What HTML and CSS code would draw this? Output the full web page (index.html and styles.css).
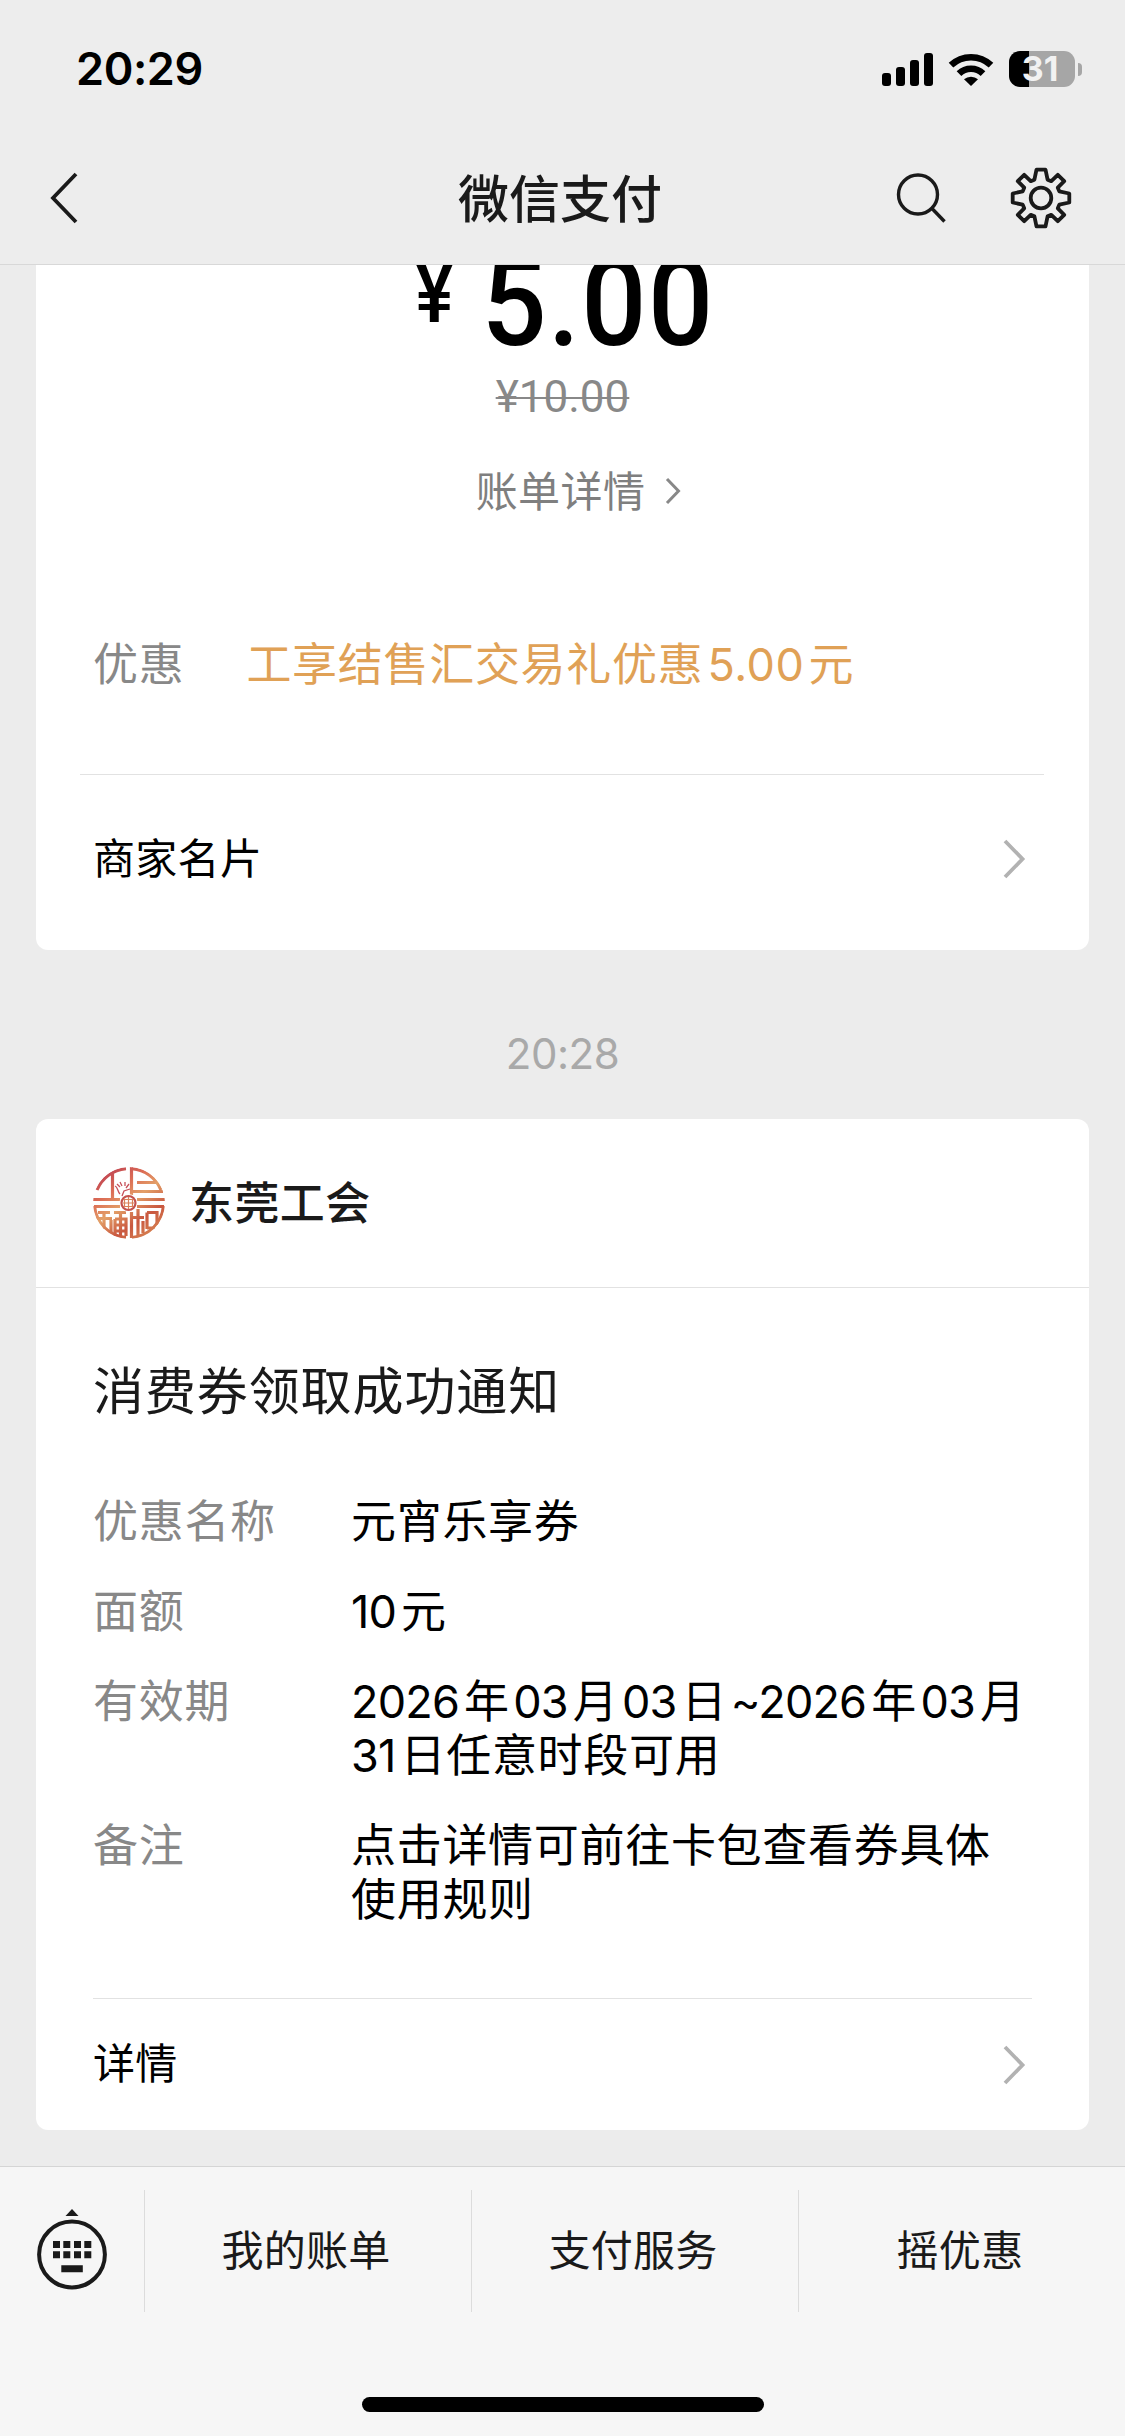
FILE: index.html
```html
<!DOCTYPE html>
<html lang="zh-CN">
<head>
<meta charset="utf-8">
<title>微信支付</title>
<link rel="stylesheet" href="styles.css">
</head>
<body>
<div class="screen">
  <header class="header">
    <div class="status">
      <span class="clock">20:29</span>
      <div class="status-icons">
        <svg class="signal" width="52" height="33" viewBox="0 0 52 33"><rect x="0" y="20" width="9" height="13" rx="3"/><rect x="14" y="14" width="9" height="19" rx="3"/><rect x="28" y="7" width="9" height="26" rx="3"/><rect x="42" y="0" width="9" height="33" rx="3"/></svg>
        <svg class="wifi" width="46" height="33" viewBox="0 0 46 33"><path d="M3 12.200a29 29 0 0 1 40 0M11 20.700a17 17 0 0 1 24 0" fill="none" stroke="#000" stroke-width="6.600"/><path d="M16 26.200a11 11 0 0 1 14 0L23 33z"/></svg>
        <div class="battery"><span class="battery-level">31</span><i class="battery-cap"></i></div>
      </div>
    </div>
    <nav class="nav">
      <svg class="back" width="30" height="54" viewBox="0 0 30 54"><path d="M27 3 4 27l23 24" fill="none" stroke="#1a1a1a" stroke-width="3.800"/></svg>
      <h1 class="nav-title">微信支付</h1>
      <div class="nav-actions">
        <svg width="52" height="52" viewBox="0 0 52 52" fill="none" stroke="#1a1a1a" stroke-width="3.400"><circle cx="23" cy="22.500" r="19.500"/><path d="m37 36.500 12.500 13"/></svg>
        <svg width="64" height="64" viewBox="-32 -32 64 64" fill="none" stroke="#1a1a1a" stroke-width="3.800" stroke-linejoin="round"><circle r="10.300"/><path d="M-4.500-28.300H4.500L6.600-18.300L10.300-16.800L16.800-23.200L23.200-16.800L16.800-10.300L18.300-6.600L28.300-4.500V4.500L18.300 6.600L16.800 10.300L23.200 16.800L16.800 23.200L10.300 16.800L6.600 18.300L4.500 28.300H-4.500L-6.600 18.300L-10.300 16.800L-16.800 23.200L-23.200 16.800L-16.800 10.300L-18.300 6.600L-28.300 4.500V-4.500L-18.300-6.600L-16.800-10.300L-23.200-16.800L-16.800-23.200L-10.300-16.800L-6.600-18.300Z"/></svg>
      </div>
    </nav>
  </header>

  <main class="chat">
    <section class="card bill">
      <div class="amount"><span class="yen">¥</span><span class="sum">5.00</span></div>
      <div class="origin">¥10.00</div>
      <div class="bill-link"><span>账单详情</span><svg width="16" height="28" viewBox="0 0 16 28"><path d="m2 2 11.500 12L2 26" fill="none" stroke="#888" stroke-width="3"/></svg></div>
      <div class="discount"><span class="label">优惠</span><span class="offer">工享结售汇交易礼优惠<span class="num">5.00</span>元</span></div>
      <div class="link-row merchant"><span>商家名片</span><svg width="24" height="42" viewBox="0 0 24 42"><path d="m3 3 17.500 18L3 39" fill="none" stroke="#b2b2b2" stroke-width="3.800"/></svg></div>
    </section>

    <time class="stamp">20:28</time>

    <section class="card notice">
      <div class="sender">
        <svg class="avatar" width="72" height="72" viewBox="0 0 72 72" fill="none">
          <defs>
            <linearGradient id="tone" gradientUnits="userSpaceOnUse" x1="10" y1="0" x2="58" y2="72"><stop offset="0" stop-color="#b93a52"/><stop offset=".3" stop-color="#dc6d55"/><stop offset=".5" stop-color="#e3a068"/><stop offset=".75" stop-color="#c9573f"/><stop offset="1" stop-color="#d98a55"/></linearGradient>
            <clipPath id="disc"><circle cx="36" cy="36" r="36"/></clipPath>
          </defs>
          <g clip-path="url(#disc)" stroke="url(#tone)" stroke-width="3.200">
            <path d="M4 23A34.500 34.500 0 0 1 33 1.600M39 1.600A34.500 34.500 0 0 1 68 23M1.500 39A34.500 34.500 0 0 0 33 70.500M39 70.500A34.500 34.500 0 0 0 70.500 39"/>
            <path d="M19.500 5V32M0 32.500H27M1 39.500H27M38.500 0V28M44 15.500H63M38 24.500H70M44 32.500H72M44 39.500H71"/>
            <path d="M5 45.500H17M2 51.500H19M11 46V62M18 53V66M21 45.500H33M22 52H33V69M22 52V69M27.500 46V70M22 58H33M22 64H33"/>
            <path d="M38.500 45V71M38 50.500H51M45 42V70M50 54V66M54 45.500V62M54 45.500H64V58M54 61H62"/>
          </g>
          <circle cx="35.500" cy="36" r="9" fill="#fff"/><circle cx="35.500" cy="36" r="7" stroke="#c4524d" stroke-width="2.200"/>
          <path d="M35.500 30v12M30 36h11M31.500 32.500h8v7h-8z" stroke="#d98058" stroke-width="1.200"/>
          <path d="M27 27c-3-3-2-7-5-8m2-2 3 3m0-5 2 4m3-4v4m4-2-3 4m4 1-6 2-2 5" stroke="#c65059" stroke-width="1.300"/>
        </svg>
        <span>东莞工会</span>
      </div>
      <div class="notice-body">
        <h2 class="notice-title">消费券领取成功通知</h2>
        <dl class="fields">
          <dt>优惠名称</dt><dd>元宵乐享券</dd>
          <dt>面额</dt><dd><span class="num lead">10</span>元</dd>
          <dt>有效期</dt><dd><span class="num lead">2026</span>年<span class="num">03</span>月<span class="num">03</span>日<span class="num">~2026</span>年<span class="num">03</span>月<br><span class="num lead">31</span>日任意时段可用</dd>
          <dt>备注</dt><dd>点击详情可前往卡包查看券具体<br>使用规则</dd>
        </dl>
        <div class="link-row detail"><span>详情</span><svg width="24" height="42" viewBox="0 0 24 42"><path d="m3 3 17.500 18L3 39" fill="none" stroke="#b2b2b2" stroke-width="3.800"/></svg></div>
      </div>
    </section>
  </main>

  <footer class="footer">
    <div class="menu">
      <div class="keyboard"><svg width="72" height="84" viewBox="0 0 72 84"><path d="M36 1l6.500 7h-13z" fill="#1a1a1a"/><circle cx="36" cy="46.500" r="32.900" fill="none" stroke="#1a1a1a" stroke-width="4"/><path fill="#1a1a1a" d="M17 33h7v7h-7zM27.300 33h7v7h-7zM38 33h7v7h-7zM48.300 33h7v7h-7zM17 43.300h7v7h-7zM27.300 43.300h7v7h-7zM38 43.300h7v7h-7zM48.300 43.300h7v7h-7zM25.300 57.300h21.500v7H25.300z"/></svg></div>
      <div class="menu-item">我的账单</div>
      <div class="menu-item">支付服务</div>
      <div class="menu-item">摇优惠</div>
    </div>
    <div class="home"></div>
  </footer>
</div>
</body>
</html>
```
FILE: styles.css
```css
* { box-sizing: border-box; }
body {
  margin: 0;
  background: #ececec;
  color: #000;
  font-family: "Noto Sans CJK SC", sans-serif;
}
svg { display: block; flex: none; }
h1, h2, dl, dd { margin: 0; }

.screen {
  display: flex;
  flex-direction: column;
  width: 1125px;
  height: 2436px;
  overflow: hidden;
}

/* Header */
.header {
  flex: none;
  height: 265px;
  background: #ededed;
  border-bottom: 1px solid #d8d8d8;
}
.status {
  display: flex;
  justify-content: space-between;
  align-items: center;
  height: 138px;
  padding: 0 43px 0 76px;
}
.clock {
  font: 600 45px/54px Inter, sans-serif;
  letter-spacing: -0.4px;
}
.status-icons { display: flex; align-items: center; }
.wifi { margin: 0 15px 0 14px; }
.battery { display: flex; align-items: center; gap: 3px; }
.battery-level {
  width: 66px;
  height: 36px;
  padding-right: 4px;
  border-radius: 11px;
  background: linear-gradient(90deg, #000 20px, #a6a6a6 20px);
  color: #f2f2f2;
  font: 700 34px/36px Inter, sans-serif;
  text-align: center;
}
.battery-cap {
  width: 4px;
  height: 13px;
  border-radius: 0 4px 4px 0;
  background: #a6a6a6;
}
.nav {
  display: grid;
  grid-template-columns: 1fr auto 1fr;
  align-items: center;
  height: 120px;
  padding: 0 52px 0 49px;
}
.nav-title {
  padding: 0 2px 5px 0;
  font-size: 51px;
  line-height: 60px;
  font-weight: 500;
  color: #1a1a1a;
}
.nav-actions {
  display: flex;
  justify-content: flex-end;
  align-items: center;
  gap: 62px;
}

/* Message list */
.chat {
  flex: 1;
  min-height: 0;
  overflow: hidden;
  padding: 0 36px;
}
.card { background: #fff; border-radius: 12px; }
.num {
  margin: 0 5px 0 3.500px;
  font-family: Inter, sans-serif;
  line-height: 0;
  letter-spacing: -0.800px;
}
.num.lead { margin-left: 0; }
.offer .num { margin: 0 4px; letter-spacing: 0.600px; }

.bill {
  height: 685px;
  display: flex;
  flex-direction: column;
  border-radius: 0 0 12px 12px;
}
.amount {
  display: flex;
  justify-content: center;
  align-items: flex-start;
  gap: 18px;
  height: 122px;
  margin-top: -22px;
  font-family: Roboto, sans-serif;
  font-weight: 500;
}
.yen {
  margin-left: 9px;
  font-size: 84px;
  line-height: 102px;
  transform: scaleX(0.87);
}
.sum {
  font-size: 122px;
  line-height: 122px;
  letter-spacing: 1.500px;
  transform: scaleX(0.94);
}
.origin {
  margin-top: 6px;
  align-self: center;
  font: 400 44px/52px Roboto, sans-serif;
  color: #888;
  text-decoration: line-through 2px;
}
.bill-link {
  display: flex;
  justify-content: center;
  align-items: center;
  gap: 20px;
  height: 60px;
  margin: 38px 0 0 32px;
  font-size: 42px;
  line-height: 60px;
  letter-spacing: 0.400px;
  color: #7f7f7f;
}
.bill-link span { padding-bottom: 5px; }
.discount {
  display: flex;
  gap: 62px;
  margin: 111px 57px 0;
  font-size: 45px;
  line-height: 60px;
  letter-spacing: 0.700px;
}
.label { color: #888; }
.offer { color: #e0a156; }
.link-row {
  display: flex;
  justify-content: space-between;
  align-items: center;
  border-top: 1px solid #e2e2e2;
  font-size: 42px;
  line-height: 60px;
  letter-spacing: 0.300px;
}
.link-row span { padding-bottom: 7px; }
.merchant {
  flex: 1;
  margin: 82px 45px 0 44px;
  padding: 0 18px 7px 13px;
}

.stamp {
  display: block;
  height: 169px;
  text-align: center;
  font: 400 42px/208px Inter, sans-serif;
  letter-spacing: -0.500px;
  color: #a9a9a9;
}

.notice { height: 1011px; }
.sender {
  display: flex;
  align-items: center;
  gap: 24px;
  height: 169px;
  padding: 0 57px;
  border-bottom: 1px solid #e2e2e2;
  font-size: 45px;
  line-height: 60px;
  letter-spacing: 0.400px;
  font-weight: 500;
  color: #1a1a1a;
}
.sender span { padding-bottom: 5px; }
.notice-body { padding: 68px 57px 0; }
.notice-title {
  font-size: 51px;
  line-height: 64px;
  font-weight: 400;
  letter-spacing: 0.900px;
  color: #1a1a1a;
}
.fields {
  display: grid;
  grid-template-columns: 258px 1fr;
  row-gap: 36px;
  margin-top: 72px;
  font-size: 45px;
  line-height: 54px;
  letter-spacing: 0.700px;
  white-space: nowrap;
}
.fields dt { color: #888; }
.detail {
  height: 132px;
  margin-top: 74px;
  padding-right: 6px;
}

/* Footer */
.footer {
  flex: none;
  height: 270px;
  background: #f6f6f6;
  border-top: 1px solid #d5d5d5;
}
.menu {
  display: grid;
  grid-template-columns: 144px 1fr 1fr 1fr;
  height: 122px;
  margin-top: 23px;
}
.keyboard { padding: 18px 0 0 36px; }
.menu-item {
  padding-right: 4px;
  border-left: 1px solid #dcdcdc;
  text-align: center;
  font-size: 42px;
  line-height: 116px;
  letter-spacing: 0.300px;
  color: #1a1a1a;
}
.home {
  width: 402px;
  height: 15px;
  margin: 85px auto 0;
  border-radius: 8px;
  background: #000;
}
```
